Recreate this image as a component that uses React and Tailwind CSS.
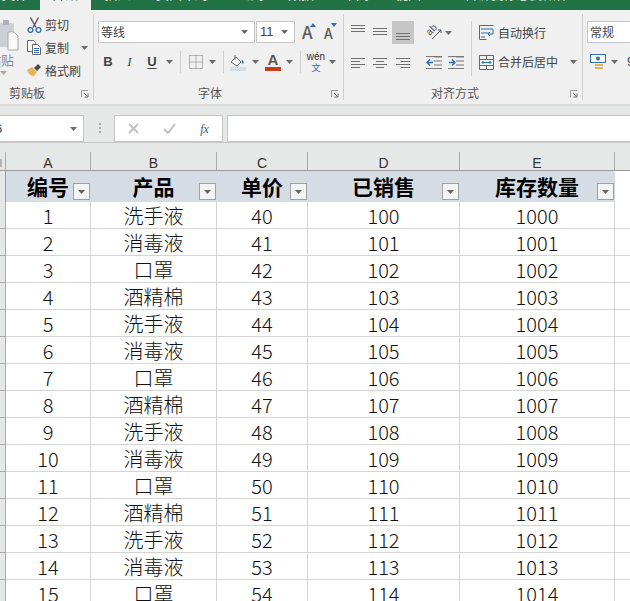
const CJK = { fontFamily: '"Noto Sans CJK SC", "Liberation Sans", sans-serif' };

const rows = [
  [1, '洗手液', 40, 100, 1000],
  [2, '消毒液', 41, 101, 1001],
  [3, '口罩', 42, 102, 1002],
  [4, '酒精棉', 43, 103, 1003],
  [5, '洗手液', 44, 104, 1004],
  [6, '消毒液', 45, 105, 1005],
  [7, '口罩', 46, 106, 1006],
  [8, '酒精棉', 47, 107, 1007],
  [9, '洗手液', 48, 108, 1008],
  [10, '消毒液', 49, 109, 1009],
  [11, '口罩', 50, 110, 1010],
  [12, '酒精棉', 51, 111, 1011],
  [13, '洗手液', 52, 112, 1012],
  [14, '消毒液', 53, 113, 1013],
  [15, '口罩', 54, 114, 1014],
];

const widths = ['w-[85px]', 'w-[126px]', 'w-[91px]', 'w-[152px]', 'w-[155px]'];
const letters = ['A', 'B', 'C', 'D', 'E'];
const heads = ['编号', '产品', '单价', '已销售', '库存数量'];

function Caret({ color = '#6b6b6b' }) {
  return (
    <svg width="7" height="4" viewBox="0 0 7 4" className="block">
      <path d="M0 0h7L3.5 4z" fill={color} />
    </svg>
  );
}

function Cell({ w, children }) {
  return <div className={`${w} h-full flex items-center justify-center shrink-0`}>{children}</div>;
}

function Sep() {
  return <div className="w-px h-[22px] bg-[#d0d0d0]" />;
}

function Launcher() {
  return (
    <svg width="8" height="8" viewBox="0 0 8 8" className="absolute right-[4px] bottom-[2px]">
      <path d="M0.5 7V0.5H7" fill="none" stroke="#9a9a9a" />
      <path d="M3 3l3.5 3.5M7 3.5V7H3.5" fill="none" stroke="#6b6b6b" />
    </svg>
  );
}

function Lines({ ys, xs }) {
  return (
    <svg width="15" height="15" viewBox="0 0 15 15" className="block">
      {ys.map((y, i) => (
        <path key={y} d={`M${xs[i][0]} ${y + 0.5}H${xs[i][1]}`} stroke="#6f6f6f" />
      ))}
    </svg>
  );
}

function TopTabs() {
  const tabs = [
    ['w-[30px]', '文件', 'text-white'],
    ['w-[10px]', '', 'text-white'],
    ['w-[51px] bg-[#f0f0f0]', '开始', 'text-[#217346]'],
    ['w-[53px]', '插入', 'text-white'],
    ['w-[76px]', '页面布局', 'text-white'],
    ['w-[60px]', '公式', 'text-white'],
    ['w-[42px]', '数据', 'text-white'],
    ['w-[68px]', '审阅', 'text-white'],
    ['w-[36px]', '视图', 'text-white'],
    ['w-[194px]', '告诉我你想要做什么', 'text-[#cfe3d8]'],
  ];
  return (
    <div className="h-[10px] bg-[#217346] flex overflow-hidden">
      {tabs.map(([w, t, c]) => (
        <div key={w} className={`${w} h-[10px] shrink-0 overflow-hidden text-center`}>
          <div className={`${c} text-[13px] leading-[14px] -mt-[13px]`}>{t}</div>
        </div>
      ))}
    </div>
  );
}

function Clipboard() {
  return (
    <div className="relative w-[94px] shrink-0 border-r border-[#cfcfcf] my-[4px] flex text-[#444]">
      <div className="w-[22px] shrink-0 overflow-hidden relative">
        <svg width="20" height="34" viewBox="0 0 20 34" className="absolute left-0 top-[3px]">
          <path d="M0 6h14v24H0z" fill="#ccd0d6" />
          <path d="M3 3h6v5H3z" fill="#aeb2b8" />
          <path d="M8 15h6l4 4v14H8z" fill="#fafafa" stroke="#a8a8a8" />
        </svg>
        <div className="absolute right-[8px] top-[38px] text-[13px] leading-[16px] whitespace-nowrap text-[#8c8c8c]">粘贴</div>
        <div className="absolute left-[0px] top-[57px]">
          <Caret color="#a8a8a8" />
        </div>
      </div>
      <div className="flex flex-col -mt-[1px] text-[12px] leading-[16px] pl-[5px]">
        <div className="h-[23px] flex items-center gap-[3px]">
          <svg width="15" height="16" viewBox="0 0 15 16">
            <path d="M3.5 0.5l5.5 10M11.5 0.5L6 10.5" stroke="#555" strokeWidth="1.4" fill="none" />
            <circle cx="3.5" cy="13" r="2.4" fill="none" stroke="#2b6fb0" strokeWidth="1.3" />
            <circle cx="11.5" cy="13" r="2.4" fill="none" stroke="#2b6fb0" strokeWidth="1.3" />
          </svg>
          <span>剪切</span>
        </div>
        <div className="h-[23px] flex items-center gap-[3px]">
          <svg width="15" height="15" viewBox="0 0 15 15">
            <path d="M0.5 0.5h6l2 2v9h-8z" fill="#fff" stroke="#666" />
            <path d="M5.5 4.5h5l3 3v7h-8z" fill="#fff" stroke="#666" />
            <path d="M7 8.5h5M7 10.5h5M7 12.5h5" stroke="#2b6fb0" />
          </svg>
          <span>复制</span>
          <span className="ml-[9px]">
            <Caret />
          </span>
        </div>
        <div className="h-[23px] flex items-center gap-[3px]">
          <svg width="15" height="15" viewBox="0 0 15 15">
            <path d="M0 7l5-3 5 5-4 5-1-2-1 1-1-2-1 0z" fill="#e6b35a" />
            <path d="M7 5l4-4 3 3-4 4z" fill="#4a4a4a" />
          </svg>
          <span>格式刷</span>
        </div>
      </div>
      <div className="absolute left-[9px] -bottom-[1px] text-[12px] leading-[16px] text-[#555]">剪贴板</div>
      <Launcher />
    </div>
  );
}

function FontGroup() {
  return (
    <div className="relative w-[250px] shrink-0 border-r border-[#cfcfcf] my-[4px] text-[#444] pl-[4px]">
      <div className="flex h-[22px] mt-[7px] items-stretch">
        <div className="w-[157px] bg-white border border-[#c6c6c6] flex items-center justify-between pl-[2px] pr-[6px] text-[12px]">
          <span className="text-[#444]">等线</span>
          <Caret />
        </div>
        <div className="ml-px w-[39px] bg-white border border-[#c6c6c6] flex items-center justify-between pl-[3px] pr-[6px] text-[13px]">
          <span style={{ fontFamily: '"Liberation Sans", sans-serif' }}>11</span>
          <Caret />
        </div>
        <div className="relative ml-[7px] w-[13px] text-[17px] leading-[22px] text-[#5a5a5a] font-medium">
          A
          <svg width="6" height="4" viewBox="0 0 6 4" className="absolute -right-[1px] top-[2px]">
            <path d="M3 0l3 4H0z" fill="#2b6fb0" />
          </svg>
        </div>
        <div className="relative ml-[9px] w-[12px] text-[14px] leading-[24px] text-[#5a5a5a] font-medium">
          A
          <svg width="6" height="4" viewBox="0 0 6 4" className="absolute -right-[1px] top-[2px]">
            <path d="M0 0h6L3 4z" fill="#2b6fb0" />
          </svg>
        </div>
      </div>
      <div className="flex h-[24px] mt-[7px] items-center" style={{ fontFamily: '"Liberation Sans", sans-serif' }}>
        <Cell w="w-[20px]">
          <span className="font-bold text-[13px]">B</span>
        </Cell>
        <Cell w="w-[23px]">
          <span className="italic text-[13px]" style={{ fontFamily: '"Liberation Serif", serif' }}>I</span>
        </Cell>
        <Cell w="w-[22px]">
          <span className="font-bold text-[13px] underline underline-offset-2">U</span>
        </Cell>
        <Cell w="w-[12px]">
          <Caret />
        </Cell>
        <Cell w="w-[10px]">
          <Sep />
        </Cell>
        <Cell w="w-[21px]">
          <svg width="14" height="14" viewBox="0 0 14 14">
            <path d="M0.5 0.5h13v13h-13zM7 0.5v13M0.5 7h13" fill="none" stroke="#777" strokeDasharray="1 1" />
          </svg>
        </Cell>
        <Cell w="w-[12px]">
          <Caret />
        </Cell>
        <Cell w="w-[10px]">
          <Sep />
        </Cell>
        <Cell w="w-[20px]">
          <svg width="16" height="17" viewBox="0 0 16 17">
            <path d="M1 8l5-5 5 5-4 4z" fill="#fff" stroke="#666" />
            <path d="M5 1v5" stroke="#666" />
            <path d="M12 6c2 1 2 3 1 4-1-1-2-2-1-4z" fill="#2b6fb0" />
            <path d="M0 13h16v4H0z" fill="#d6dce4" />
          </svg>
        </Cell>
        <Cell w="w-[14px]">
          <Caret />
        </Cell>
        <Cell w="w-[22px]">
          <div className="flex flex-col items-center">
            <span className="font-bold text-[15px] leading-[14px] text-[#5a5a5a]">A</span>
            <div className="w-[16px] h-[4px] bg-[#c43e1c]" />
          </div>
        </Cell>
        <Cell w="w-[10px]">
          <Caret />
        </Cell>
        <Cell w="w-[12px]">
          <Sep />
        </Cell>
        <Cell w="w-[20px]">
          <div className="flex flex-col items-center leading-none">
            <span className="text-[10px] leading-[10px] text-[#333]">wén</span>
            <span className="text-[9px] leading-[10px] mt-px text-[#2b6fb0]" style={CJK}>文</span>
          </div>
        </Cell>
        <Cell w="w-[12px]">
          <Caret />
        </Cell>
      </div>
      <div className="absolute left-[104px] -bottom-[1px] text-[12px] leading-[16px] text-[#555]">字体</div>
      <Launcher />
    </div>
  );
}

function AlignGroup() {
  return (
    <div className="relative w-[239px] shrink-0 border-r border-[#cfcfcf] my-[4px] text-[#444]">
      <div className="flex items-start mt-[7px]">
        <div className="w-[127px] shrink-0 pl-[4px]">
          <div className="flex h-[23px] items-center">
            <Cell w="w-[21px]">
              <Lines ys={[0, 3, 6]} xs={[[0, 14], [0, 14], [0, 14]]} />
            </Cell>
            <Cell w="w-[23px]">
              <Lines ys={[3, 6, 9]} xs={[[0, 14], [0, 14], [0, 14]]} />
            </Cell>
            <div className="w-[22px] h-[23px] bg-[#c6c6c6] flex items-center justify-center shrink-0">
              <Lines ys={[8, 11, 14]} xs={[[0, 14], [0, 14], [0, 14]]} />
            </div>
            <div className="relative ml-[12px] w-[16px] h-[15px]">
              <span className="absolute left-0 top-0 text-[10px] leading-[10px] -rotate-45 text-[#555]" style={{ fontFamily: '"Liberation Sans", sans-serif' }}>ab</span>
              <svg width="16" height="15" viewBox="0 0 16 15" className="absolute left-0 top-0">
                <path d="M6 14l9-9M12 5h3v3" stroke="#555" fill="none" />
              </svg>
            </div>
            <div className="ml-[3px]">
              <Caret />
            </div>
          </div>
          <div className="flex h-[24px] mt-[6px] items-center">
            <Cell w="w-[21px]">
              <Lines ys={[3, 6, 9, 12]} xs={[[0, 14], [0, 9], [0, 14], [0, 9]]} />
            </Cell>
            <Cell w="w-[23px]">
              <Lines ys={[3, 6, 9, 12]} xs={[[0, 14], [3, 11], [0, 14], [3, 11]]} />
            </Cell>
            <Cell w="w-[22px]">
              <Lines ys={[3, 6, 9, 12]} xs={[[0, 14], [5, 14], [0, 14], [5, 14]]} />
            </Cell>
            <div className="ml-[12px]">
              <svg width="16" height="13" viewBox="0 0 16 13" className="block">
                <path d="M8 1h8M8 5h8M8 9h8M0 12.5h16M0 0.5h16" stroke="#777" />
                <path d="M7 6.5H1M4 3.5l-3 3 3 3" stroke="#2b6fb0" strokeWidth="1.4" fill="none" />
              </svg>
            </div>
            <div className="ml-[6px]">
              <svg width="16" height="13" viewBox="0 0 16 13" className="block">
                <path d="M8 1h8M8 5h8M8 9h8M0 12.5h16M0 0.5h16" stroke="#777" />
                <path d="M1 6.5h6M4 3.5l3 3-3 3" stroke="#2b6fb0" strokeWidth="1.4" fill="none" />
              </svg>
            </div>
          </div>
        </div>
        <div className="w-px h-[55px] bg-[#d0d0d0] shrink-0" />
        <div className="pl-[7px] text-[12px] leading-[16px]">
          <div className="h-[23px] flex items-center gap-[4px]">
            <svg width="15" height="15" viewBox="0 0 15 15">
              <path d="M0.5 0.5h14M0.5 14.5h7M0.5 0.5v14" stroke="#666" fill="none" />
              <path d="M2 4h12M2 8h8M2 12h4" stroke="#2b6fb0" fill="none" />
              <path d="M14 4v5H9M11 7l-2 2 2 2" stroke="#2b6fb0" fill="none" />
            </svg>
            <span>自动换行</span>
          </div>
          <div className="h-[24px] mt-[6px] flex items-center gap-[4px]">
            <svg width="15" height="15" viewBox="0 0 15 15">
              <path d="M0.5 0.5h14v14H0.5zM0.5 4.5h14M0.5 10.5h14M7.5 0.5v4M7.5 10.5v4" fill="none" stroke="#666" />
              <path d="M3 7.5h9M4.5 6l-1.5 1.5L4.5 9M10.5 6L12 7.5 10.5 9" stroke="#2b6fb0" fill="none" />
            </svg>
            <span>合并后居中</span>
            <span className="ml-[8px]">
              <Caret />
            </span>
          </div>
        </div>
      </div>
      <div className="absolute left-[87px] -bottom-[1px] text-[12px] leading-[16px] text-[#555]">对齐方式</div>
      <Launcher />
    </div>
  );
}

function NumberGroup() {
  return (
    <div className="flex-1 min-w-0 overflow-hidden pl-[4px] my-[4px] text-[#444]">
      <div className="h-[22px] mt-[7px] bg-white border border-[#c6c6c6] border-r-0 pl-[2px] flex items-center text-[12px]">常规</div>
      <div className="h-[24px] mt-[7px] flex items-center">
        <svg width="16" height="17" viewBox="0 0 16 17" className="ml-[3px] shrink-0">
          <path d="M0.5 0.5h15v8h-15z" fill="#fff" stroke="#2b6fb0" />
          <circle cx="8" cy="4.5" r="2" fill="#2b6fb0" />
          <path d="M5 10h8v2H5zM5 13h8v2H5z" fill="#e6b35a" />
        </svg>
        <span className="ml-[5px] shrink-0">
          <Caret />
        </span>
        <span className="ml-[9px] text-[13px] shrink-0" style={{ fontFamily: '"Liberation Sans", sans-serif' }}>9</span>
      </div>
    </div>
  );
}

function FormulaBar() {
  return (
    <div className="h-[37px] bg-[#e6e7e7] border-b border-[#c6c6c6] flex items-start pt-[9px]" style={{ fontFamily: '"Liberation Sans", sans-serif' }}>
      <div className="w-[84px] h-[27px] bg-white border border-[#c6c6c6] border-l-0 flex items-center justify-between pr-[6px] shrink-0 overflow-hidden">
        <span className="text-[13px] text-[#444] -ml-[5px]">6</span>
        <Caret />
      </div>
      <div className="w-[30px] h-[27px] flex items-center justify-center shrink-0">
        <svg width="3" height="11" viewBox="0 0 3 11">
          <path d="M1 0h2v2H1zM1 4h2v2H1zM1 8h2v2H1z" fill="#a8a8a8" />
        </svg>
      </div>
      <div className="w-[109px] h-[27px] bg-white border border-[#c6c6c6] flex items-center shrink-0">
        <Cell w="w-[36px]">
          <svg width="11" height="11" viewBox="0 0 11 11">
            <path d="M1 1l9 9M10 1l-9 9" stroke="#c0c0c0" strokeWidth="1.8" />
          </svg>
        </Cell>
        <Cell w="w-[36px]">
          <svg width="13" height="11" viewBox="0 0 13 11">
            <path d="M1 6l4 4 7-9" stroke="#c0c0c0" strokeWidth="2" fill="none" />
          </svg>
        </Cell>
        <Cell w="w-[35px]">
          <span className="italic text-[12px] text-[#555]" style={{ fontFamily: '"Liberation Serif", serif' }}>fx</span>
        </Cell>
      </div>
      <div className="ml-[4px] flex-1 h-[27px] bg-white border border-[#c6c6c6] border-r-0" />
    </div>
  );
}

function FilterButton() {
  return (
    <div className="absolute right-[1px] bottom-[2px] w-[17px] h-[17px] bg-[#f4f4f4] border border-[#a0a0a0] flex items-center justify-center">
      <Caret color="#666" />
    </div>
  );
}

export default function App() {
  return (
    <div className="w-[630px] h-[601px] overflow-hidden bg-white" style={CJK}>
      <TopTabs />
      <div className="h-[96px] bg-[#f0f0f0] border-b-2 border-[#dcdcdc] flex">
        <Clipboard />
        <FontGroup />
        <AlignGroup />
        <NumberGroup />
      </div>
      <FormulaBar />
      <div className="flex h-[28px] bg-[#e6e7e7] border-b border-[#9a9a9a] items-end" style={{ fontFamily: '"Liberation Sans", sans-serif' }}>
        <div className="w-[6px] h-[18px] border-r border-[#ababab] shrink-0 relative">
          <div className="absolute left-0 bottom-[3px] w-[2px] h-[8px] bg-[#b4b4b4]" />
        </div>
        {letters.map((l, i) => (
          <div key={l} className={`${widths[i]} h-[18px] border-r border-[#ababab] shrink-0 flex items-end justify-center text-[14px] leading-[14px] text-[#333]`}>
            {l}
          </div>
        ))}
      </div>
      <div className="flex h-[31px]">
        <div className="w-[6px] bg-[#e6e7e7] border-r border-[#9a9a9a] shrink-0" />
        {heads.map((h, i) => (
          <div key={h} className={`${widths[i]} relative bg-[#d6dce4] shrink-0 flex items-center justify-center pb-[1px] pr-[1px] text-[21px] font-bold text-black leading-none`}>
            {h}
            <FilterButton />
          </div>
        ))}
      </div>
      {rows.map((r) => (
        <div key={r[0]} className="flex h-[27px]">
          <div className="w-[6px] bg-[#e6e7e7] border-r border-b border-[#ababab] shrink-0" />
          {r.map((v, i) => (
            <div key={i} className={`${widths[i]} border-r border-b border-[#d4d4d4] shrink-0 flex items-center justify-center pt-[1px] text-[20px] font-light text-[#111] leading-none`}>
              {v}
            </div>
          ))}
          <div className="flex-1 border-b border-[#d4d4d4]" />
        </div>
      ))}
    </div>
  );
}
